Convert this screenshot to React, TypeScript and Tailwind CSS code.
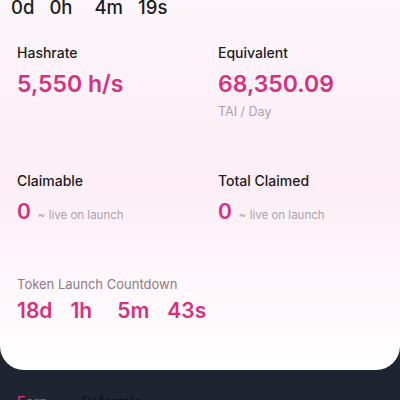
import React from "react";

const pink = "text-[#d8307c]";

function Stat({ label, value, sub, note }: { label: string; value: string; sub?: string; note?: boolean }) {
  return (
    <div className="flex flex-col">
      <div className="text-[14px] font-medium leading-[18px] text-[#1c1b20]">{label}</div>
      {note ? (
        <div className="mt-[10px] flex items-baseline">
          <span className={`text-[21px] font-semibold leading-[24px] ${pink}`}>{value}</span>
          <span className="ml-[7px] text-[11.5px] leading-[16px] text-[#aba1aa]">~ live on launch</span>
        </div>
      ) : (
        <div className={`mt-[9px] text-[23px] font-semibold leading-[26px] ${pink}`}>{value}</div>
      )}
      {sub && <div className="mt-[7px] text-[12.5px] leading-[16px] text-[#aaa2a8]">{sub}</div>}
    </div>
  );
}

export default function App() {
  return (
    <div
      className="relative h-[400px] w-[400px] overflow-hidden bg-[#1e2530]"
      style={{ fontFamily: "Inter, 'Noto Sans', sans-serif" }}
    >
      <div className="flex h-[370px] flex-col rounded-b-[24px] bg-gradient-to-b from-[#fbf6fb] via-[#fdeef6] to-[#ffffff] px-[17px]">
        <div className="-mt-[4px] flex items-baseline text-[18.5px] font-medium leading-[22px] text-[#1c1b20]">
          <span className="-ml-[6px]">0d</span>
          <span className="ml-[15px]">0h</span>
          <span className="ml-[22px]">4m</span>
          <span className="ml-[15px]">19s</span>
        </div>

        <div className="mt-[26px] grid grid-cols-[201px_1fr]">
          <Stat label="Hashrate" value="5,550 h/s" />
          <Stat label="Equivalent" value="68,350.09" sub="TAI / Day" />
        </div>

        <div className="mt-[52px] grid grid-cols-[201px_1fr]">
          <Stat label="Claimable" value="0" note />
          <Stat label="Total Claimed" value="0" note />
        </div>

        <div className="mt-[52px] text-[13px] leading-[16px] text-[#8c7b88]">Token Launch Countdown</div>
        <div className={`mt-[6px] flex items-baseline text-[21px] font-semibold leading-[26px] ${pink}`}>
          <span>18d</span>
          <span className="ml-[18px]">1h</span>
          <span className="ml-[25px]">5m</span>
          <span className="ml-[18px]">43s</span>
        </div>
      </div>

      <div className="flex items-start px-[17px] pt-[23px] text-[14px] font-medium leading-[18px]">
        <span className="text-[#d8307c]">Earn</span>
        <span className="ml-[34px] text-[#0f131a]">Referrals</span>
      </div>
    </div>
  );
}
